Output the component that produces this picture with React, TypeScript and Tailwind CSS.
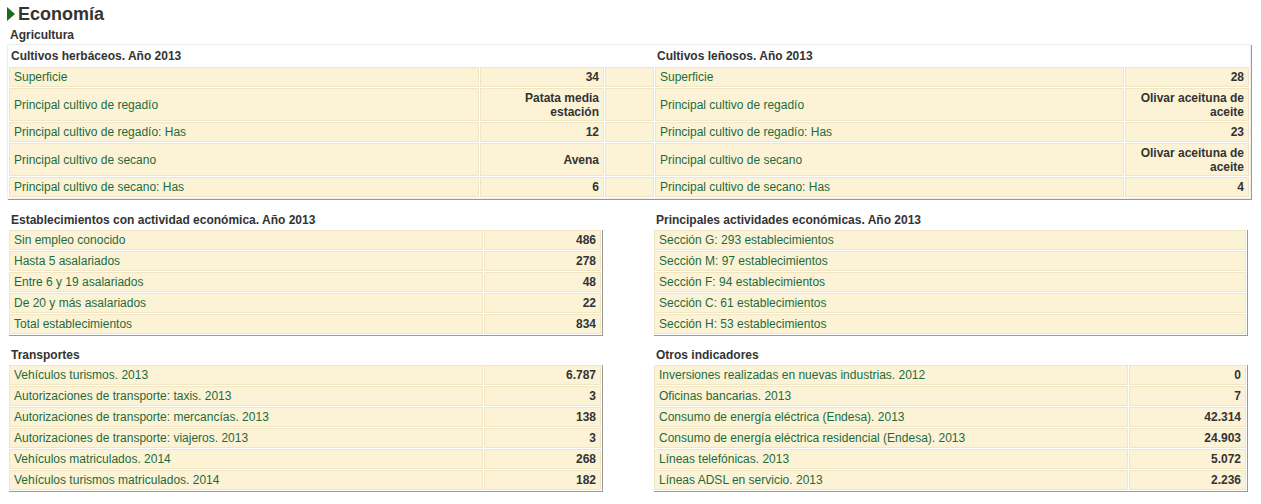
const cell = "bg-[#fcf3d7] border border-[#f1e6c4] px-[4px] py-0 text-[12px] leading-[14px]";
const lbl = cell + " text-[#1d6b3c]";
const val = cell + " text-right font-bold text-[#333]";

type Row = [string, string];

const herb: Row[] = [
  ["Superficie", "34"],
  ["Principal cultivo de regadío", "Patata media estación"],
  ["Principal cultivo de regadío: Has", "12"],
  ["Principal cultivo de secano", "Avena"],
  ["Principal cultivo de secano: Has", "6"],
];
const len: Row[] = [
  ["Superficie", "28"],
  ["Principal cultivo de regadío", "Olivar aceituna de aceite"],
  ["Principal cultivo de regadío: Has", "23"],
  ["Principal cultivo de secano", "Olivar aceituna de aceite"],
  ["Principal cultivo de secano: Has", "4"],
];
const tall = [false, true, false, true, false];

function Box({ title, rows, single }: { title: string; rows: Row[] | string[]; single?: boolean }) {
  return (
    <div className="w-[594px]">
      <div className="text-[12px] font-bold text-[#333] h-[19px] pl-[3px] flex items-center">{title}</div>
      <table className="w-[594px] border-separate border-spacing-[1px] shadow-[1px_1px_0_#999] bg-white table-fixed">
        <tbody>
          {rows.map((r, i) =>
            single ? (
              <tr key={i} className="h-[20px]"><td className={lbl}>{r as string}</td></tr>
            ) : (
              <tr key={i} className="h-[20px]">
                <td className={lbl}>{(r as Row)[0]}</td>
                <td className={val + " w-[117px]"}>{(r as Row)[1]}</td>
              </tr>
            )
          )}
        </tbody>
      </table>
    </div>
  );
}

export default function App() {
  return (
    <div className="w-[1261px] h-[504px] bg-white overflow-hidden px-[7px] font-[Liberation_Sans]">
      <div className="flex items-center h-[26px] pt-[2px]">
        <svg width="8" height="14" viewBox="0 0 8 14" className="mr-[3px]"><polygon points="0,0 8,7 0,14" fill="#1a6b1a" /></svg>
        <span className="text-[18px] font-bold text-[#333]">Economía</span>
      </div>
      <div className="text-[12px] font-bold text-[#333] h-[18px] pl-[3px] flex items-center">Agricultura</div>
      <table className="w-[1239px] border-separate border-spacing-[1px] border border-[#eee] shadow-[1px_1px_0_#999] table-fixed">
        <colgroup>
          <col className="w-[470px]" /><col className="w-[124px]" /><col className="w-[49px]" /><col className="w-[469px]" /><col className="w-[124px]" />
        </colgroup>
        <tbody>
          <tr className="h-[20px]">
            <td colSpan={2} className="text-[12px] font-bold text-[#333] px-[2px] py-0">Cultivos herbáceos. Año 2013</td>
            <td></td>
            <td colSpan={2} className="text-[12px] font-bold text-[#333] px-[2px] py-0">Cultivos leñosos. Año 2013</td>
          </tr>
          {herb.map((r, i) => (
            <tr key={i} className={tall[i] ? "h-[33px]" : "h-[20px]"}>
              <td className={lbl}>{r[0]}</td>
              <td className={val}>{r[1]}</td>
              <td className={cell}></td>
              <td className={lbl}>{len[i][0]}</td>
              <td className={val}>{len[i][1]}</td>
            </tr>
          ))}
        </tbody>
      </table>
      <div className="flex gap-[51px] pl-[1px] mt-[11px]">
        <Box title="Establecimientos con actividad económica. Año 2013" rows={[
          ["Sin empleo conocido", "486"], ["Hasta 5 asalariados", "278"], ["Entre 6 y 19 asalariados", "48"],
          ["De 20 y más asalariados", "22"], ["Total establecimientos", "834"]]} />
        <Box single title="Principales actividades económicas. Año 2013" rows={[
          "Sección G: 293 establecimientos", "Sección M: 97 establecimientos", "Sección F: 94 establecimientos",
          "Sección C: 61 establecimientos", "Sección H: 53 establecimientos"]} />
      </div>
      <div className="flex gap-[51px] pl-[1px] mt-[10px]">
        <Box title="Transportes" rows={[
          ["Vehículos turismos. 2013", "6.787"], ["Autorizaciones de transporte: taxis. 2013", "3"],
          ["Autorizaciones de transporte: mercancías. 2013", "138"], ["Autorizaciones de transporte: viajeros. 2013", "3"],
          ["Vehículos matriculados. 2014", "268"], ["Vehículos turismos matriculados. 2014", "182"]]} />
        <Box title="Otros indicadores" rows={[
          ["Inversiones realizadas en nuevas industrias. 2012", "0"], ["Oficinas bancarias. 2013", "7"],
          ["Consumo de energía eléctrica (Endesa). 2013", "42.314"], ["Consumo de energía eléctrica residencial (Endesa). 2013", "24.903"],
          ["Líneas telefónicas. 2013", "5.072"], ["Líneas ADSL en servicio. 2013", "2.236"]]} />
      </div>
    </div>
  );
}
